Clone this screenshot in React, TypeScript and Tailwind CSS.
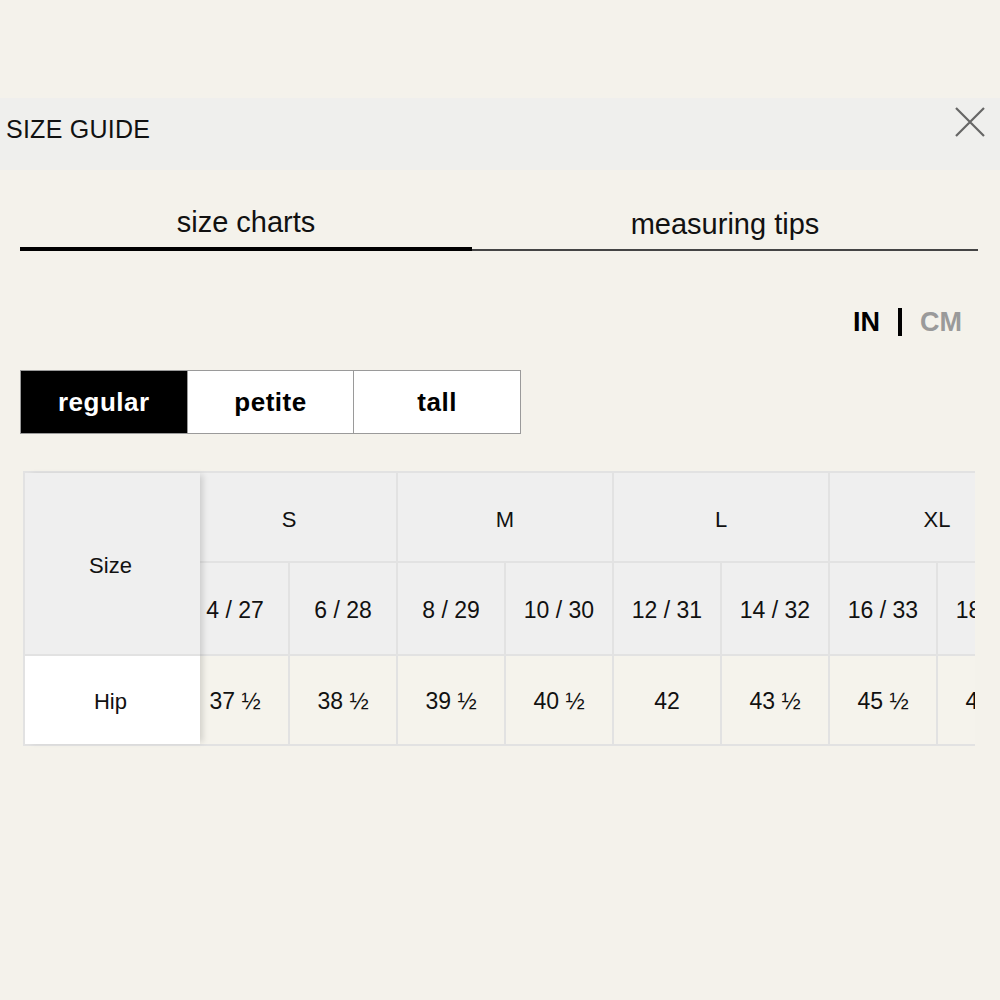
import React, { useState } from "react";

const groups = [
  { label: "S", cols: [{ size: "4 / 27", hip: "37 ½" }, { size: "6 / 28", hip: "38 ½" }] },
  { label: "M", cols: [{ size: "8 / 29", hip: "39 ½" }, { size: "10 / 30", hip: "40 ½" }] },
  { label: "L", cols: [{ size: "12 / 31", hip: "42" }, { size: "14 / 32", hip: "43 ½" }] },
  { label: "XL", cols: [{ size: "16 / 33", hip: "45 ½" }, { size: "18 / 34", hip: "47 ½" }] },
];

const fits = ["regular", "petite", "tall"];

const SizeGuide = () => {
  const [tab, setTab] = useState("charts");
  const [fit, setFit] = useState("regular");
  const [unit, setUnit] = useState("IN");

  return (
    <div className="min-h-[1000px] w-[1000px] bg-[#f4f2eb] pt-[98px] text-[#111] font-['Liberation_Sans',Arial,sans-serif]">
      <div className="flex h-[72px] items-start justify-between bg-[#efefed] pl-[6px] pr-[14px]">
        <h1 className="mt-[19px] text-[25px] leading-none tracking-[0.01em]">SIZE GUIDE</h1>
        <button className="mt-[8px] text-[#666]">
          <svg width="32" height="32" viewBox="0 0 32 32" fill="none" stroke="currentColor" strokeWidth="2.2">
            <path d="M2 2 L30 30 M30 2 L2 30" />
          </svg>
        </button>
      </div>

      <div className="mx-[20px] mt-[35px] flex w-[958px]">
        <button
          onClick={() => setTab("charts")}
          className={`w-[452px] pb-[8px] text-[29px] leading-[34px] ${
            tab === "charts" ? "border-b-4 border-black" : "border-b-2 border-[#444]"
          }`}
        >
          size charts
        </button>
        <button
          onClick={() => setTab("tips")}
          className={`flex-1 pb-[8px] text-[29px] leading-[34px] ${
            tab === "tips" ? "border-b-4 border-black" : "mt-auto border-b-2 border-[#444]"
          }`}
        >
          measuring tips
        </button>
      </div>

      <div className="mr-[38px] mt-[57px] flex items-center justify-end gap-[18px] text-[27px] font-bold leading-none">
        <button onClick={() => setUnit("IN")} className={unit === "IN" ? "text-black" : "text-[#9a9a9a]"}>
          IN
        </button>
        <span className="h-[28px] w-[4px] bg-black" />
        <button onClick={() => setUnit("CM")} className={unit === "CM" ? "text-black" : "text-[#9a9a9a]"}>
          CM
        </button>
      </div>

      <div className="ml-[20px] mt-[34px] flex w-[501px] border border-[#9a9a9a]">
        {fits.map((f, i) => (
          <button
            key={f}
            onClick={() => setFit(f)}
            className={`h-[62px] flex-1 text-[26px] font-bold tracking-[0.02em] ${
              i > 0 ? "border-l border-[#9a9a9a]" : ""
            } ${fit === f ? "bg-black text-white" : "bg-white text-black"}`}
          >
            {f}
          </button>
        ))}
      </div>

      <div className="ml-[23px] mt-[37px] flex w-[952px] border-y-2 border-l-2 border-[#e2e2e2] text-[23px]">
        <div className="relative z-10 flex w-[175px] shrink-0 flex-col shadow-[5px_0_6px_-2px_rgba(0,0,0,0.14)]">
          <div className="flex h-[183px] items-center justify-center border-b-2 border-[#e2e2e2] bg-[#efefef] pr-[4px] pt-[4px] text-[22px]">
            Size
          </div>
          <div className="flex h-[88px] items-center justify-center bg-white pr-[4px] pt-[2px] text-[22px]">Hip</div>
        </div>
        <div className="flex-1 overflow-hidden">
          <div className="ml-[-18px] flex">
            {groups.map((g) => (
              <div key={g.label} className="flex w-[216px] shrink-0 flex-col">
                <div className="flex h-[90px] items-center justify-center border-b-2 border-r-2 border-[#e2e2e2] bg-[#efefef] pt-[4px] text-[22px]">
                  {g.label}
                </div>
                <div className="flex">
                  {g.cols.map((c) => (
                    <div key={c.size} className="flex w-[108px] flex-col">
                      <div className="flex h-[93px] items-center justify-center border-b-2 border-r-2 border-[#e2e2e2] bg-[#efefef] pt-[3px]">
                        {c.size}
                      </div>
                      <div className="flex h-[88px] items-center justify-center border-r-2 border-[#e2e2e2] bg-[#f5f3ec] pt-[2px]">
                        {c.hip}
                      </div>
                    </div>
                  ))}
                </div>
              </div>
            ))}
          </div>
        </div>
      </div>
    </div>
  );
};

export default function App() {
  return <SizeGuide />;
}
